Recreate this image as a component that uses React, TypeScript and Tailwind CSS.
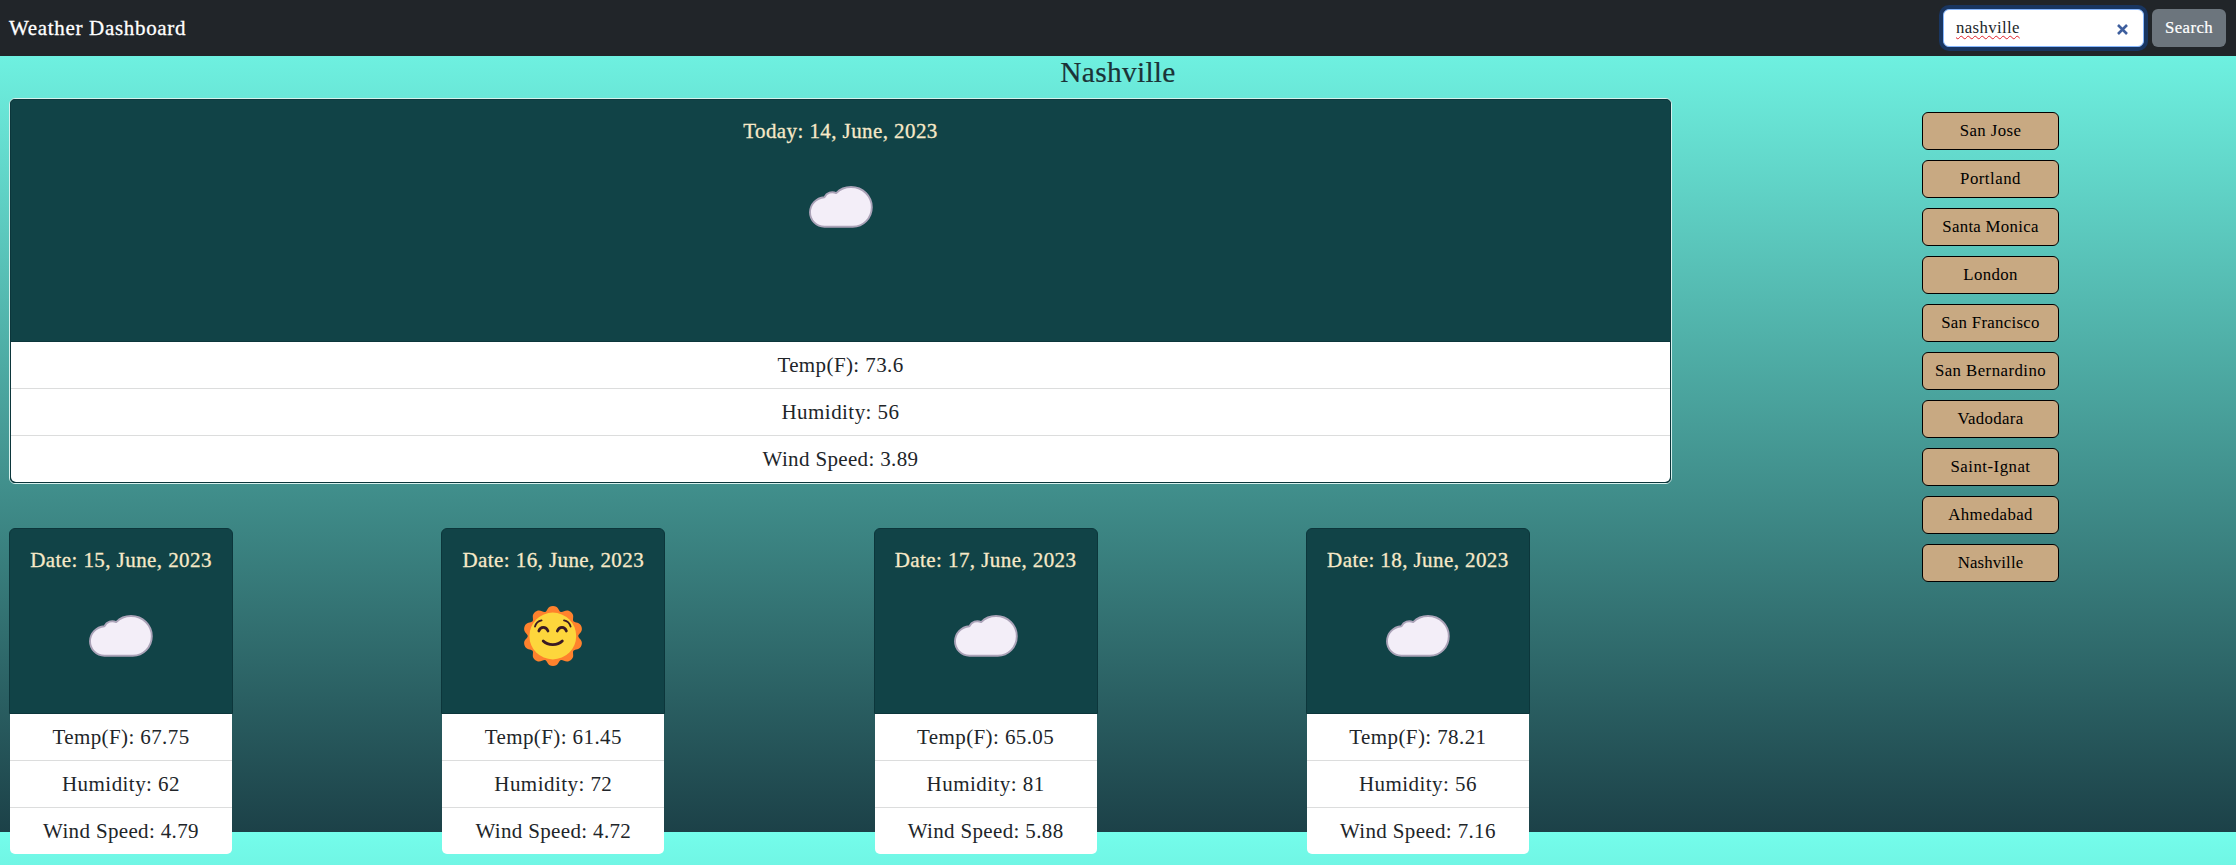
import React from "react";

type IconKind = "cloud" | "sun";

interface Row {
  text: string;
  spacing: string;
}

interface Forecast {
  title: string;
  icon: IconKind;
  temp: string;
  humidity: string;
  wind: string;
}

const today: Forecast = {
  title: "Today: 14, June, 2023",
  icon: "cloud",
  temp: "73.6",
  humidity: "56",
  wind: "3.89",
};

const forecast: Forecast[] = [
  { title: "Date: 15, June, 2023", icon: "cloud", temp: "67.75", humidity: "62", wind: "4.79" },
  { title: "Date: 16, June, 2023", icon: "sun", temp: "61.45", humidity: "72", wind: "4.72" },
  { title: "Date: 17, June, 2023", icon: "cloud", temp: "65.05", humidity: "81", wind: "5.88" },
  { title: "Date: 18, June, 2023", icon: "cloud", temp: "78.21", humidity: "56", wind: "7.16" },
];

const cities = [
  { name: "San Jose", spacing: "tracking-[0.4px]" },
  { name: "Portland", spacing: "tracking-[0.5px]" },
  { name: "Santa Monica", spacing: "tracking-[0.3px]" },
  { name: "London", spacing: "tracking-[0.35px]" },
  { name: "San Francisco", spacing: "tracking-[0.3px]" },
  { name: "San Bernardino", spacing: "tracking-[0.45px]" },
  { name: "Vadodara", spacing: "tracking-[0.35px]" },
  { name: "Saint-Ignat", spacing: "tracking-[0.5px]" },
  { name: "Ahmedabad", spacing: "tracking-[0.4px]" },
  { name: "Nashville", spacing: "tracking-[0.15px]" },
];

function Cloud() {
  return (
    <svg width="64" height="42" viewBox="0 0 64 42" className="block">
      <path
        d="M15.5 40.8 C7.2 40.8 1 34 1 26.3 C1 18.3 7 12 15.4 11.2 C17.8 6.8 22.6 5 27.2 7.1 C31 3.2 36 1 42 1 C54 1 62.8 10.2 62.8 21.3 C62.8 32.2 54.3 40.8 43.8 40.8 Z"
        fill="#f3eef8"
        stroke="#aba3b8"
        strokeWidth="1.9"
        strokeLinejoin="round"
      />
    </svg>
  );
}

function Sun() {
  const petals = Array.from({ length: 10 }, (_, i) => (i * Math.PI) / 5);
  const at = (r: number, t: number) =>
    `${(30 + r * Math.sin(t)).toFixed(2)} ${(30 - r * Math.cos(t)).toFixed(2)}`;
  const outline = petals
    .map((a, i) => {
      const start = i === 0 ? `M${at(25.2, a - 0.3142)} ` : "";
      return `${start}C${at(25.8, a - 0.2)} ${at(30.4, a - 0.19)} ${at(30, a)} C${at(30.4, a + 0.19)} ${at(25.8, a + 0.2)} ${at(25.2, a + 0.3142)}`;
    })
    .join(" ");
  return (
    <svg width="60" height="60" viewBox="0 0 60 60" className="block">
      <path d={outline + "Z"} fill="#ff822d" />
      <circle cx="29.8" cy="30" r="23.4" fill="#fdd63c" />
      <g fill="none" stroke="#3a1a24" strokeLinecap="round">
        <path d="M12 20.6 C12.9 17.2 15.4 15 18.6 14.4" strokeWidth="1.8" />
        <path d="M47.6 20.6 C46.7 17.2 44.2 15 41 14.4" strokeWidth="1.8" />
        <path d="M15.8 25 C17.4 20.2 23 20.2 25 25" strokeWidth="2.7" />
        <path d="M34.3 25 C36.3 20.2 41.8 20.2 43.4 25" strokeWidth="2.7" />
        <path d="M20.2 35 C24.8 39.7 34.7 39.7 39.3 35" strokeWidth="2.8" />
      </g>
    </svg>
  );
}

function Rows({ data }: { data: Forecast }) {
  const rows: Row[] = [
    { text: `Temp(F): ${data.temp}`, spacing: "tracking-[0.4px]" },
    { text: `Humidity: ${data.humidity}`, spacing: "tracking-[0.45px]" },
    { text: `Wind Speed: ${data.wind}`, spacing: "tracking-[0.35px]" },
  ];
  return (
    <ul className="overflow-hidden rounded-b-[5px] bg-white">
      {rows.map((row) => (
        <li
          key={row.text}
          className={`flex h-[47px] items-center justify-center border-b border-[#dcdddd] text-[21px] leading-[30px] text-[#212529] last:h-[46px] last:border-b-0 ${row.spacing}`}
        >
          {row.text}
        </li>
      ))}
    </ul>
  );
}

function Header({ data, className }: { data: Forecast; className: string }) {
  return (
    <div className={`flex flex-col items-center border-[#0c363b] bg-[#114347] ${className}`}>
      <h5 className="text-[21px] leading-6 tracking-[0.42px] text-[#f7e9c8] [-webkit-text-stroke:0.3px_#f7e9c8]">
        {data.title}
      </h5>
      <div className="flex h-32 items-center justify-center">
        {data.icon === "cloud" ? <Cloud /> : <Sun />}
      </div>
    </div>
  );
}

export default function App() {
  return (
    <div className="h-[865px] w-full overflow-hidden bg-[linear-gradient(#74fdeb,#1c4148)] bg-[length:100%_832px] font-['Liberation_Serif',serif]">
      <nav className="flex h-14 items-center justify-between bg-[#212529] pr-[10px] pl-[9px]">
        <span className="text-[21px] leading-[30px] tracking-[0.68px] text-white [-webkit-text-stroke:0.3px_white]">
          Weather Dashboard
        </span>
        <form className="flex gap-2" onSubmit={(e) => e.preventDefault()}>
          <div className="flex h-[38px] w-[201px] items-center justify-between rounded-md border border-[#86b7fe] bg-white pr-[15px] pl-3 shadow-[0_0_0_4px_#193661]">
            <span className="text-[16.8px] leading-6 tracking-[0.35px] text-[#212529] underline decoration-[#e0202a] decoration-wavy decoration-[1px] underline-offset-[2px] [text-decoration-skip-ink:none]">
              nashville
            </span>
            <svg width="11" height="11" viewBox="0 0 11 11" className="mt-[3px]">
              <path d="M1 1 L10 10 M10 1 L1 10" stroke="#3e5f9e" strokeWidth="2.6" />
            </svg>
          </div>
          <button className="h-[38px] w-[74px] rounded-md bg-[#6c757d] text-[16.8px] tracking-[0.4px] text-white [-webkit-text-stroke:0.2px_white]">
            Search
          </button>
        </form>
      </nav>

      <h3 className="mb-[9px] text-center text-[29.4px] leading-[33px] tracking-[0.3px] text-[#1b3337] [-webkit-text-stroke:0.2px_#1b3337]">
        Nashville
      </h3>

      <div className="flex">
        <main className="w-[1672px] pl-[9px]">
          <section className="rounded-md border border-[#d6f1ed] bg-[#114347]">
            <div className="overflow-hidden rounded-[5px] border border-[#0c363b]">
              <Header data={today} className="h-[242px] border-b pt-[19px]" />
              <Rows data={today} />
            </div>
          </section>
          <div className="mt-11 flex gap-[208.3px]">
            {forecast.map((day) => (
              <section key={day.title} className="w-56 shrink-0">
                <Header data={day} className="h-[186px] rounded-t-md border pt-[19px]" />
                <div className="px-px">
                  <Rows data={day} />
                </div>
              </section>
            ))}
          </div>
        </main>
        <aside className="ml-[250px] flex flex-col gap-[10px] pt-[14px]">
          {cities.map((city) => (
            <button
              key={city.name}
              className={`h-[38px] w-[137px] rounded-md border border-black bg-[#c8a982] text-[16.8px] leading-6 text-black ${city.spacing}`}
            >
              {city.name}
            </button>
          ))}
        </aside>
      </div>
    </div>
  );
}
